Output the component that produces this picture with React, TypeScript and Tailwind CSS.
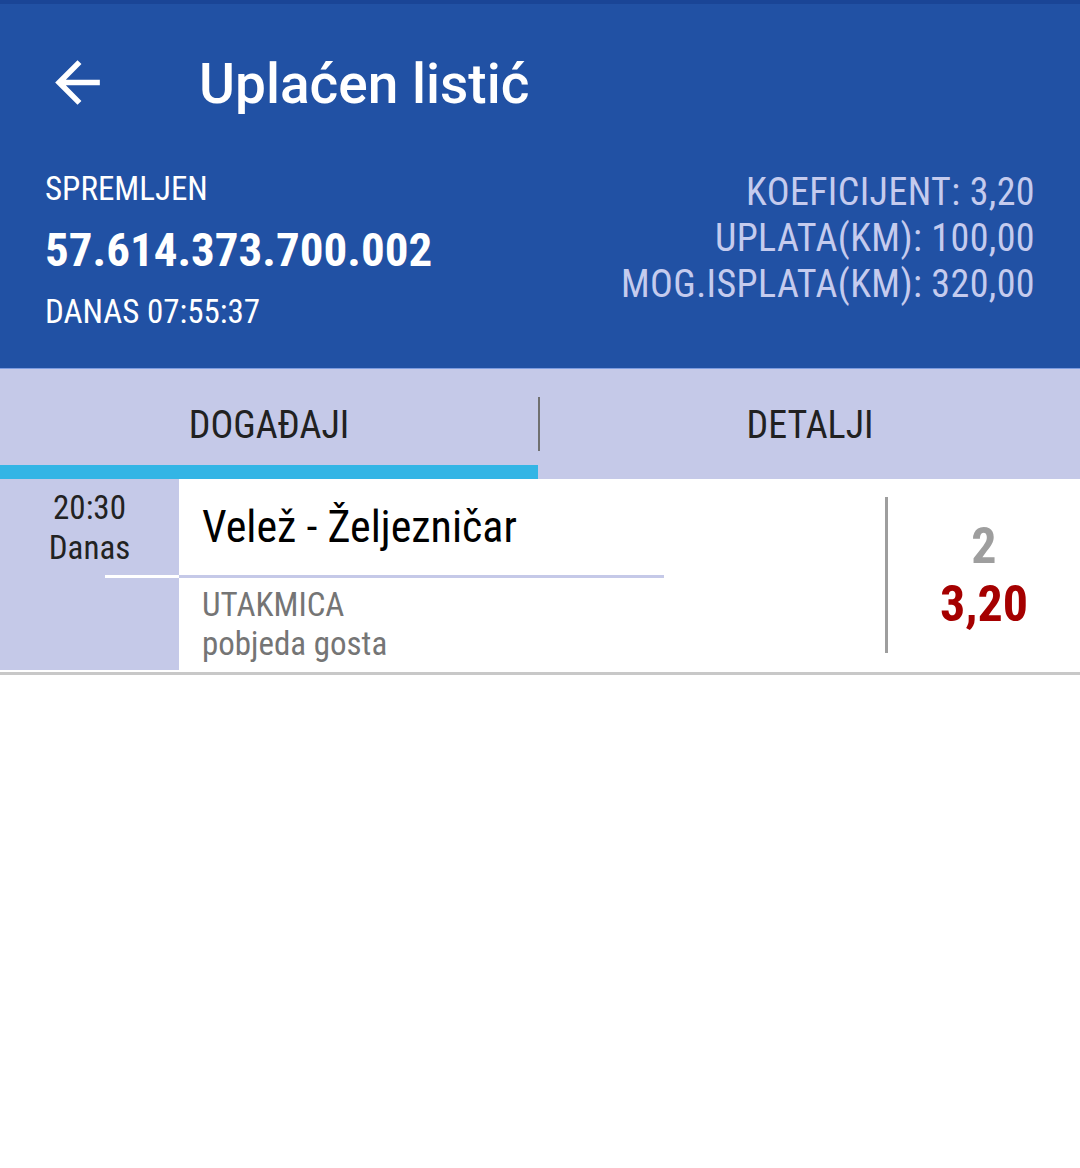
import React from "react";

const cond = "font-['Roboto_Condensed','Liberation_Sans_Narrow','DejaVu_Sans_Condensed',sans-serif]";

function BackArrow() {
  return (
    <svg width="67" height="67" viewBox="0 0 24 24" fill="#ffffff">
      <path d="M20 11H7.83l5.59-5.59L12 4l-8 8 8 8 1.41-1.41L7.83 13H20v-2z" />
    </svg>
  );
}

export default function App() {
  return (
    <div className="w-[1080px] h-[1168px] bg-white overflow-hidden">
      <div className="h-[4px] bg-[#1a4596]" />
      <div className="h-[364px] bg-[#2151a4] flex flex-col">
        <div className="h-[156px] flex items-center pl-[44px]">
          <BackArrow />
          <div className="ml-[88px] text-white font-['Roboto',sans-serif] font-medium text-[55px] leading-none pt-[4px]">
            Uplaćen listić
          </div>
        </div>
        <div className={`flex justify-between px-[45px] pt-[9px] ${cond}`}>
          <div className="flex flex-col text-white">
            <div className="text-[33px] leading-[40px]">SPREMLJEN</div>
            <div className="text-[47px] leading-[56px] font-bold mt-[13px]">57.614.373.700.002</div>
            <div className="text-[33px] leading-[40px] mt-[14px]">DANAS 07:55:37</div>
          </div>
          <div className="flex flex-col items-end text-[#c5cbee] text-[38px] leading-[46px] tracking-[0.4px]">
            <div>KOEFICIJENT: 3,20</div>
            <div>UPLATA(KM): 100,00</div>
            <div>MOG.ISPLATA(KM): 320,00</div>
          </div>
        </div>
      </div>
      <div className="h-px bg-[#7d9ce0]" />
      <div className={`flex h-[110px] bg-[#c5c9e8] ${cond} text-[#212121] text-[38px]`}>
        <div className="relative w-[538px] flex items-center justify-center pt-[2px]">
          <span>DOGAĐAJI</span>
          <div className="absolute left-0 right-0 bottom-0 h-[14px] bg-[#33b5e5]" />
        </div>
        <div className="w-[2px] h-[54px] self-center bg-[#707070]" />
        <div className="flex-1 flex items-center justify-center pt-[2px]">
          <span>DETALJI</span>
        </div>
      </div>
      <div className={`flex h-[191px] ${cond}`}>
        <div className="w-[179px] bg-[#c5c9e8] flex flex-col">
          <div className="pt-[9px] text-center text-[#222222] text-[33px] leading-[40px]">
            <div>20:30</div>
            <div>Danas</div>
          </div>
          <div className="mt-[7px] ml-[105px] h-[3px] bg-white" />
        </div>
        <div className="w-[706px] flex flex-col">
          <div className="h-[96px] pl-[23px] flex items-center text-[44px] text-black">
            Velež - Željezničar
          </div>
          <div className="w-[485px] h-[3px] bg-[#c5c9e8]" />
          <div className="pl-[23px] pt-[7px] text-[#757575] text-[33px] leading-[39px]">
            <div>UTAKMICA</div>
            <div>pobjeda gosta</div>
          </div>
        </div>
        <div className="w-[3px] h-[156px] self-center bg-[#9e9e9e]" />
        <div className="flex-1 flex flex-col items-center justify-center font-bold text-[50px] leading-[58px]">
          <div className="text-[#9e9e9e]">2</div>
          <div className="text-[#a50000]">3,20</div>
        </div>
      </div>
      <div className="mt-[2px] h-[3px] bg-[#c8c8c8]" />
    </div>
  );
}
